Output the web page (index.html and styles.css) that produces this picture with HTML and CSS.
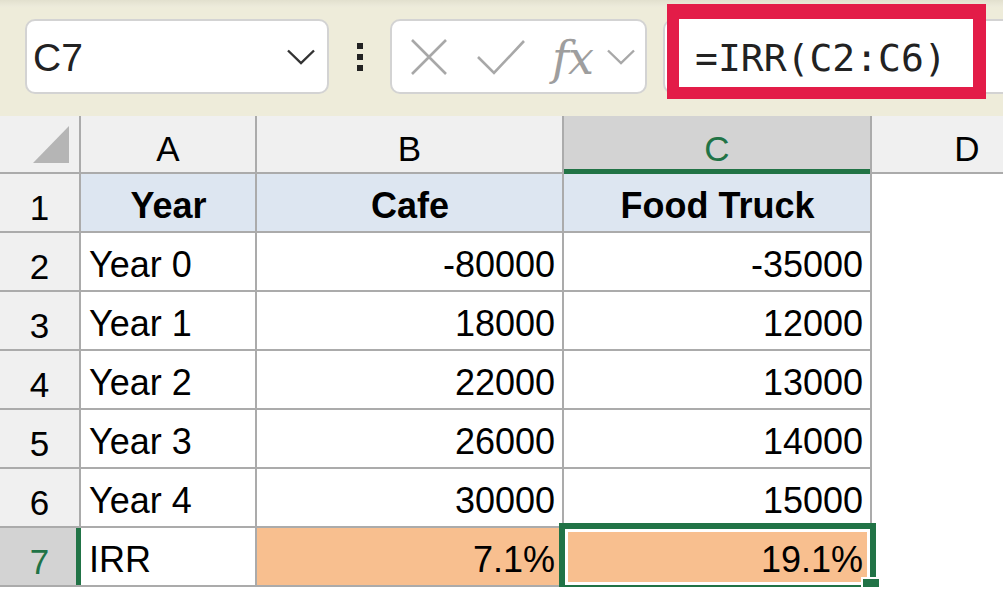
FILE: index.html
```html
<!DOCTYPE html>
<html lang="en">
<head>
    <meta charset="UTF-8">
    <title>IRR - Cafe vs Food Truck</title>
    <link rel="stylesheet" href="styles.css">
</head>
<body>
    <!-- Formula bar -->
    <div class="toolbar">
        <div class="namebox">
            <span class="cell-ref">C7</span>
            <svg class="chevron" width="28" height="16" viewBox="0 0 28 16">
                <polyline points="1,1.5 14,14 27,1.5" fill="none" stroke="#333" stroke-width="2.4"/>
            </svg>
        </div>

        <div class="grip">
            <span></span><span></span><span></span>
        </div>

        <div class="fxbox">
            <svg class="icon-cancel" width="36" height="36" viewBox="0 0 36 36">
                <path d="M1 1 L35 35 M35 1 L1 35" stroke="#a8a8a8" stroke-width="2.6" fill="none"/>
            </svg>
            <svg class="icon-enter" width="48" height="36" viewBox="0 0 48 36">
                <polyline points="1,18 17,34 47,2" stroke="#a8a8a8" stroke-width="2.6" fill="none"/>
            </svg>
            <span class="fx">fx</span>
            <svg class="icon-more" width="28" height="16" viewBox="0 0 28 16">
                <polyline points="1,1.5 14,14 27,1.5" fill="none" stroke="#a8a8a8" stroke-width="2.4"/>
            </svg>
        </div>

        <div class="formula">
            <span class="formula-text">=IRR(C2:C6)</span>
        </div>
    </div>

    <!-- Sheet -->
    <div class="sheet">
        <div class="grid">
            <div class="corner"><div class="select-all"></div></div>
            <div class="col-head">A</div>
            <div class="col-head">B</div>
            <div class="col-head active">C</div>

            <div class="row-head">1</div>
            <div class="cell title">Year</div>
            <div class="cell title">Cafe</div>
            <div class="cell title">Food Truck</div>

            <div class="row-head">2</div>
            <div class="cell">Year 0</div>
            <div class="cell num">-80000</div>
            <div class="cell num">-35000</div>

            <div class="row-head">3</div>
            <div class="cell">Year 1</div>
            <div class="cell num">18000</div>
            <div class="cell num">12000</div>

            <div class="row-head">4</div>
            <div class="cell">Year 2</div>
            <div class="cell num">22000</div>
            <div class="cell num">13000</div>

            <div class="row-head">5</div>
            <div class="cell">Year 3</div>
            <div class="cell num">26000</div>
            <div class="cell num">14000</div>

            <div class="row-head">6</div>
            <div class="cell">Year 4</div>
            <div class="cell num">30000</div>
            <div class="cell num">15000</div>

            <div class="row-head active">7</div>
            <div class="cell">IRR</div>
            <div class="cell num result">7.1%</div>
            <div class="cell num result selected">19.1%</div>
        </div>

        <div class="col-d">
            <div class="col-head">D</div>
        </div>
    </div>
</body>
</html>
```

FILE: styles.css
```css
body {
    margin: 0;
    width: 1003px;
    height: 589px;
    overflow: hidden;
    background: #fff;
    font-family: 'Liberation Sans', Arial, sans-serif;
    color: #000;
}

/* ---------- formula bar ---------- */

.toolbar {
    height: 116px;
    box-sizing: border-box;
    padding: 19px 0 0 25px;
    display: flex;
    align-items: flex-start;
    overflow: hidden;
    background: linear-gradient(#e2e0ce 0px, #eceada 6px, #eeecda 8px);
}

.namebox,
.fxbox,
.formula {
    height: 75px;
    box-sizing: border-box;
    border: 2px solid #d3d3d3;
    background: #fff;
    display: flex;
    align-items: center;
}

.namebox {
    width: 304px;
    border-radius: 10px;
    padding: 2px 12px 0 6px;
    justify-content: space-between;
}

.cell-ref {
    font-size: 39px;
    color: #222;
}

.chevron {
    margin-top: -2px;
}

.grip {
    width: 6px;
    height: 75px;
    margin: 0 27px 0 28px;
    display: flex;
    flex-direction: column;
    justify-content: center;
    gap: 5px;
}

.grip span {
    width: 6px;
    height: 6px;
    background: #222;
}

.fxbox {
    width: 257px;
    border-radius: 10px;
    padding-left: 19px;
}

.icon-enter {
    margin-left: 30px;
}

.fx {
    margin-left: 27px;
    font-family: 'DejaVu Serif', 'Liberation Serif', serif;
    font-style: italic;
    font-size: 46px;
    line-height: 1;
    color: #9e9e9e;
    letter-spacing: -1px;
    position: relative;
    top: 1px;
}

.icon-more {
    margin-left: 14px;
}

.formula {
    flex: 1;
    margin-left: 16px;
    border-right: none;
    border-radius: 10px 0 0 10px;
    padding: 2px 0 0 30px;
    position: relative;
}

/* red annotation box round the formula */
.formula::before {
    content: "";
    position: absolute;
    left: 2px;
    top: -17px;
    width: 319px;
    height: 95px;
    box-sizing: border-box;
    border-style: solid;
    border-color: #e31c48;
    border-width: 15px 13px 12px 12px;
    background: #fff;
}

.formula-text {
    position: relative;
    font-family: 'DejaVu Sans Mono', 'Liberation Mono', monospace;
    font-size: 38px;
    color: #222;
}

/* ---------- sheet ---------- */

.sheet {
    display: flex;
    align-items: flex-start;
    overflow: hidden;
}

.grid {
    flex-shrink: 0;
    display: grid;
    grid-template-columns: 79px 174px 305px 306px;
    grid-template-rows: 56px repeat(7, 57px);
    gap: 2px;
    padding: 0 2px 2px 0;
    background: #ababab;
}

.corner,
.col-head,
.row-head {
    background: #f0f0f0;
    font-size: 35px;
    line-height: 35px;
    display: flex;
    align-items: flex-end;
    justify-content: center;
    padding-bottom: 6px;
    box-sizing: border-box;
}

.corner {
    justify-content: flex-end;
    padding: 0 10px 9px 0;
}

.select-all {
    width: 36px;
    height: 37px;
    background: #b5b5b5;
    clip-path: polygon(100% 0, 100% 100%, 0 100%);
}

.col-head.active {
    background: #d3d3d3;
    color: #217346;
    box-shadow: inset 0 -3px 0 #217346, 0 2px 0 #217346;
}

.row-head.active {
    background: #d3d3d3;
    color: #217346;
    box-shadow: inset -3px 0 0 #217346, 2px 0 0 #217346;
}

.cell {
    background: #fff;
    font-size: 36px;
    line-height: 36px;
    display: flex;
    align-items: flex-end;
    padding: 0 7px 7px 8px;
    box-sizing: border-box;
    white-space: nowrap;
}

.cell.title {
    background: #dde6f1;
    font-weight: bold;
    justify-content: center;
}

.cell.num {
    justify-content: flex-end;
}

.cell.result {
    background: #f8bf8f;
}

.cell.selected {
    position: relative;
}

/* active cell frame */
.cell.selected::after {
    content: "";
    position: absolute;
    left: -5px;
    top: -5px;
    right: -6px;
    bottom: -6px;
    border: 6px solid #217346;
    box-shadow: inset 0 0 0 3px #fff;
}

/* fill handle */
.cell.selected::before {
    content: "";
    position: absolute;
    right: -11px;
    top: 49px;
    width: 16px;
    height: 16px;
    background: #217346;
    border: 2px solid #fff;
    z-index: 1;
}

.col-d {
    flex-shrink: 0;
    width: 190px;
}

.col-d .col-head {
    height: 58px;
    border-bottom: 2px solid #ababab;
}
```
